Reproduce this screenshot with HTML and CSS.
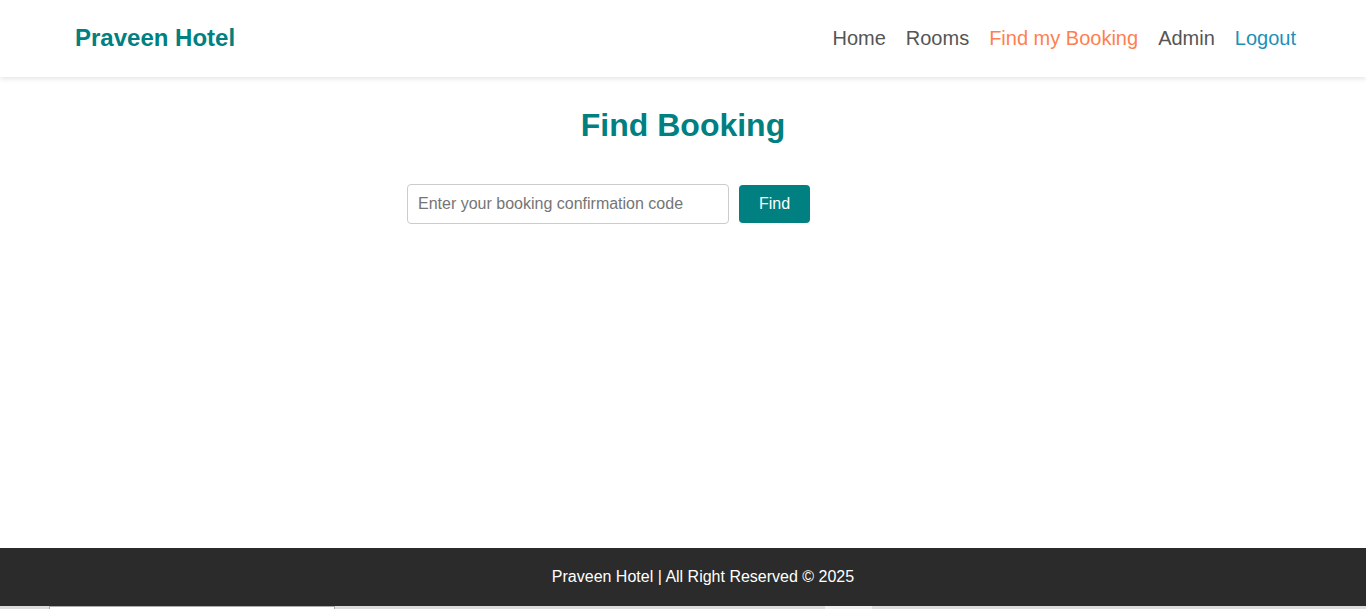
FILE: index.html
```html
<!DOCTYPE html>
<html lang="en">
<head>
<meta charset="utf-8">
<title>Praveen Hotel - Find Booking</title>
<link rel="stylesheet" href="styles.css">
</head>
<body>
<div class="app">
  <header class="navbar">
    <div class="brand">Praveen Hotel</div>
    <nav class="links">
      <a class="link">Home</a>
      <a class="link">Rooms</a>
      <a class="link active">Find my Booking</a>
      <a class="link">Admin</a>
      <a class="link logout">Logout</a>
    </nav>
  </header>
  <main class="content">
    <h2 class="title">Find Booking</h2>
    <div class="search">
      <input class="code-input" type="text" placeholder="Enter your booking confirmation code">
      <button class="find-btn">Find</button>
    </div>
  </main>
  <footer class="footer">Praveen Hotel | All Right Reserved © 2025</footer>
  <div class="hbar"><span class="thumb"></span><span class="seg"></span></div>
</div>
</body>
</html>
```
FILE: styles.css
```css
* { box-sizing: border-box; }
html, body { margin: 0; padding: 0; }
body {
  font-family: "Liberation Sans", Arial, sans-serif;
  background: #fff;
  overflow: hidden;
}
.app {
  height: 609px;
  display: flex;
  flex-direction: column;
}
.navbar {
  height: 77px;
  flex: none;
  display: flex;
  align-items: center;
  justify-content: space-between;
  padding: 0 70px 0 75px;
  background: #fff;
  box-shadow: 0 2px 5px rgba(0,0,0,0.1);
  position: relative;
  z-index: 1;
}
.brand {
  font-size: 24px;
  font-weight: bold;
  color: #008080;
  margin-top: -1px;
}
.links {
  display: flex;
  gap: 20px;
}
.link {
  font-size: 20px;
  color: #555;
  text-decoration: none;
}
.link.active { color: #ff7f50; }
.link.logout { color: #1e90b8; }
.content {
  flex: 1;
  display: flex;
  flex-direction: column;
  align-items: center;
}
.title {
  margin: 30px 0 0;
  font-size: 32px;
  font-weight: bold;
  color: #008080;
  line-height: 37px;
}
.search {
  width: 552px;
  margin-top: 40px;
  display: flex;
  align-items: center;
  justify-content: flex-start;
  gap: 10px;
}
.code-input {
  width: 322px;
  height: 40px;
  border: 1px solid #ccc;
  border-radius: 4px;
  padding: 0 10px;
  font-family: inherit;
  font-size: 16px;
  color: #333;
}
.code-input::placeholder { color: #757575; }
.find-btn {
  width: 71px;
  height: 38px;
  border: none;
  border-radius: 4px;
  background: #008080;
  color: #fff;
  font-family: inherit;
  font-size: 16px;
}
.footer {
  height: 58px;
  flex: none;
  background: #2b2b2b;
  color: #fff;
  font-size: 16px;
  display: flex;
  align-items: center;
  justify-content: center;
  padding-left: 40px;
}
.hbar {
  height: 3px;
  flex: none;
  background: #dcdcdc;
  display: flex;
}
.thumb {
  margin-left: 49px;
  width: 286px;
  background: #fff;
  border: 1px solid #aaa;
  border-bottom: none;
}
.seg {
  margin-left: 490px;
  width: 47px;
  background: #f0f0f0;
}
```
